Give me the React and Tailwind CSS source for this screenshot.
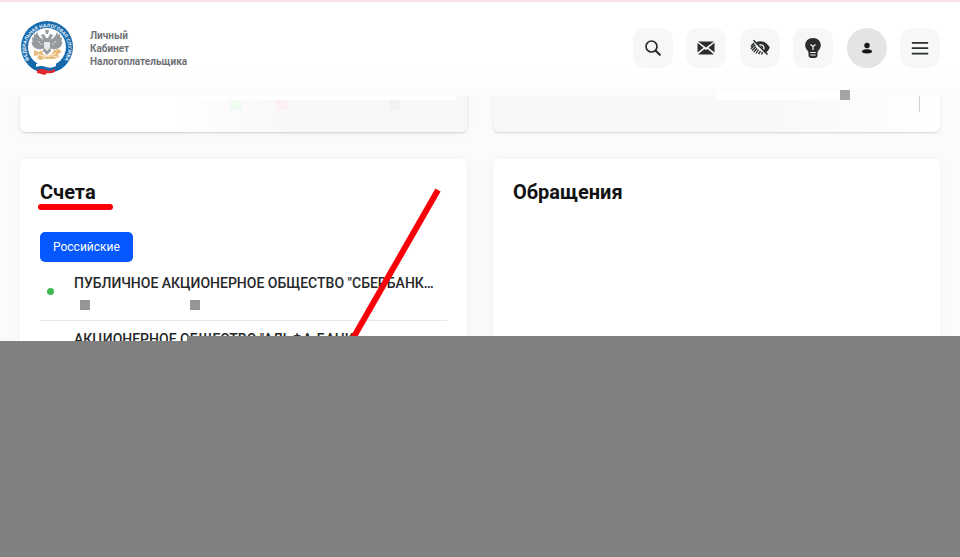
import React from 'react'

const accounts = [
  { id: 1, name: 'ПУБЛИЧНОЕ АКЦИОНЕРНОЕ ОБЩЕСТВО "СБЕРБАНК…' },
  { id: 2, name: 'АКЦИОНЕРНОЕ ОБЩЕСТВО "АЛЬФА-БАНК"' },
]

function Logo() {
  return (
    <svg viewBox="0 0 54 54" className="size-[54px] shrink-0" aria-hidden="true">
      <circle cx="27" cy="26" r="26" fill="#1668ab" />
      <circle cx="27" cy="26" r="19" fill="#fff" />
      <defs>
        <path id="ring" d="M12.500 42.500 A21 21 0 1 1 41.500 42.500" />
      </defs>
      <text fill="#e4f1fa" fontSize="5" fontWeight="700" fontFamily="Roboto, sans-serif">
        <textPath href="#ring" startOffset="50%" textAnchor="middle">ФЕДЕРАЛЬНАЯ  НАЛОГОВАЯ  СЛУЖБА</textPath>
      </text>
      {/* eagle */}
      <g fill="#959a9f">
        <path d="M25 20 C21 18 18 15 17 11 L15.500 14 L14 12.500 L13.500 17 L12 16 L12.500 21 L11.500 21 C12 26 16 29 22 28 L26 26 Z" />
        <path d="M29 20 C33 18 36 15 37 11 L38.500 14 L40 12.500 L40.500 17 L42 16 L41.500 21 L42.500 21 C42 26 38 29 32 28 L28 26 Z" />
        <path d="M26 17 L24 13 L21 14 L22 17 L24 20 L23 30 L27 34 L31 30 L30 20 L32 17 L33 14 L30 13 L28 17 Z" />
        <path d="M25 9 h4 l-1 4 h-2 Z" />
      </g>
      <path d="M24 21 h6 v6 l-3 3 l-3 -3 Z" fill="#e6e8ea" />
      <path d="M20 14 l3 3 M34 14 l-3 3 M18 20 l4 4 M36 20 l-4 4" stroke="#e8eaec" strokeWidth="0.800" />
      <path d="M14 29 l5 2 l3 -2 l1 4 l4 2 l5 -2 l2 -4 l5 -1 l3 3 l-4 2 l1 3 l-5 2 h-9 l-5 1 l-3 -2 l2 -3 l-5 1 Z" fill="#e6bd7c" />
      <path d="M18 33 l5 2 h8 l5 -3 M22 39 l4 -3 M33 35 l4 1" stroke="#fff3dc" fill="none" />
      {/* flag ribbon */}
      <path d="M16 43 q5 -2 10 0 t10 -1 v5 q-5 2 -10 0 t-10 1 Z" fill="#fff" />
      <path d="M16 46 q5 -2 10 0 t10 -1 v4 q-5 2 -10 0 t-10 1 Z" fill="#1668ab" />
      <path d="M17 49 q5 -2 9 0 t9 -1 v3 q-5 2 -8 1 l-2 2 l-8 -2 Z" fill="#e32a2e" />
    </svg>
  )
}

function SearchIcon() {
  return (
    <svg viewBox="0 0 20 20" className="size-5" fill="none" stroke="#2b2c2e" strokeWidth="1.700" strokeLinecap="round">
      <circle cx="8.500" cy="8.500" r="5.500" />
      <path d="M12.700 12.700 L16.800 16.800" strokeWidth="2.200" />
    </svg>
  )
}

function MailIcon() {
  return (
    <svg viewBox="0 0 20 20" className="size-5" fill="#2b2c2e">
      <path d="M2 3.500 H18 L10 9.500 Z" />
      <path d="M1.500 4.800 L7.500 9.700 L1.500 14.500 Z" />
      <path d="M18.500 4.800 L12.500 9.700 L18.500 14.500 Z" />
      <path d="M2 16.500 L8.400 10.900 L10 12 L11.600 10.900 L18 16.500 Z" />
    </svg>
  )
}

function HiddenIcon() {
  return (
    <svg viewBox="0 0 20 20" className="size-5" fill="none" stroke="#2b2c2e">
      <path d="M6 4.200 C11.500 1.500 17 4.500 19.800 9.500 C18.500 12.300 17 14 15.300 15 L13.500 13 C16.500 9 13 4.800 8.600 6.800 Z" fill="#2b2c2e" stroke="none" />
      <path d="M10 7.500 C12.500 7 13.800 9 13 11 Z" fill="#2b2c2e" stroke="none" />
      <path d="M4 5 L1 8.500 M5.300 6.500 L0.800 10.800 M6 8.500 L2 12.500 M7 10.300 L3.800 14 M8.500 11.500 L6 15.500 M10.500 12.800 L8.700 16.200 M12.700 14 L11.500 16.500" strokeWidth="1.400" />
      <path d="M3.500 2.200 L17.500 16.500" strokeWidth="1.600" />
    </svg>
  )
}

function BulbIcon() {
  return (
    <svg viewBox="0 0 20 20" className="size-5">
      <path d="M10 0 C5.300 0 2.200 3.200 2.200 7.200 C2.200 9.800 3.600 11.500 4.700 12.700 C5.300 13.300 5.500 14 5.500 15 V17.300 C5.500 19 6.500 20 8.200 20 H11.800 C13.500 20 14.500 19 14.500 17.300 V15 C14.500 14 14.700 13.300 15.300 12.700 C16.400 11.500 17.800 9.800 17.800 7.200 C17.800 3.200 14.700 0 10 0 Z" fill="#2b2c2e" />
      <path d="M7.500 6.500 L10 8.500 L12.500 6.500 M10 8.500 V12 M7.300 14.500 H12.700 M7.300 17 H12.700" stroke="#f6f8f8" strokeWidth="1.200" fill="none" />
    </svg>
  )
}

function UserIcon() {
  return (
    <svg viewBox="0 0 20 20" className="size-5" fill="#151617">
      <circle cx="10" cy="7.500" r="2.700" />
      <path d="M5 13.500 C5 11.800 8 11.300 10 11.300 C12 11.300 15 11.800 15 13.500 C15 15.200 13 15.400 10 15.400 C7 15.400 5 15.200 5 13.500 Z" />
    </svg>
  )
}

function MenuIcon() {
  return (
    <svg viewBox="0 0 20 20" className="size-5" stroke="#2b2c2e" strokeWidth="1.700" strokeLinecap="round">
      <path d="M2.500 4.800 H17.500 M2.500 10.200 H17.500 M2.500 15.600 H17.500" />
    </svg>
  )
}

const actions = [
  { label: 'Поиск', Icon: SearchIcon },
  { label: 'Сообщения', Icon: MailIcon },
  { label: 'Версия для слабовидящих', Icon: HiddenIcon },
  { label: 'Подсказки', Icon: BulbIcon },
  { label: 'Профиль', Icon: UserIcon, round: true },
  { label: 'Меню', Icon: MenuIcon },
]

function Header() {
  return (
    <header className="relative z-10 flex h-24 items-center justify-between border-t-2 border-[#f8e1e5] bg-linear-to-b from-white from-70% to-[#fcfcfc] px-5 pb-0.5">
      <a href="#" className="flex items-center gap-4 text-[10px] leading-[13px] font-bold text-[#6f7176]">
        <Logo />
        <span>Личный<br />Кабинет<br />Налогоплательщика</span>
      </a>
      <nav className="flex w-[307px] justify-between">
        {actions.map(({ label, Icon, round }) => (
          <button
            key={label}
            aria-label={label}
            className={round
              ? 'flex size-10 items-center justify-center rounded-full bg-[#e4e4e7]'
              : 'flex size-10 items-center justify-center rounded-xl bg-[#f6f8f8]'}
          >
            <Icon />
          </button>
        ))}
      </nav>
    </header>
  )
}

function AccountRow({ name }) {
  return (
    <li className="flex items-center border-b border-[#e8e8ea] pt-2 pb-2.5">
      <span className="ml-[7px] size-[7px] shrink-0 rounded-full bg-[#3fb950]" />
      <div className="ml-5 min-w-0">
        <p className="text-sm leading-5 font-medium whitespace-nowrap text-[#27282a]">{name}</p>
        <div className="mt-[7px] ml-1.5 flex gap-[100px]">
          <span className="size-2.5 bg-[#969696]" />
          <span className="size-2.5 bg-[#969696]" />
        </div>
      </div>
    </li>
  )
}

export default function App() {
  return (
    <div className="flex min-h-screen flex-col overflow-hidden bg-[#fafbfd] font-[Roboto,sans-serif]">
      <Header />
      <main className="grid grid-cols-2 gap-x-[26px] gap-y-[27px] px-5">
        <section className="h-9 rounded-b-md bg-linear-to-r from-white from-35% to-[#f8f8f8] to-60% shadow-[0_1px_2px_rgba(0,0,0,0.16),0_0_8px_rgba(0,0,0,0.05)]">
          <div className="ml-[150px] h-1 w-[286px] bg-white" />
          <div className="flex">
            <span className="ml-[210px] h-2.5 w-3 bg-[#effcef]" />
            <span className="ml-[34px] h-2.5 w-3 bg-[#fdf0f5]" />
            <span className="ml-[102px] size-2.5 bg-[#f2f2f2]" />
          </div>
        </section>
        <section className="relative z-20 flex h-9 items-start justify-end rounded-b-md bg-linear-to-r from-[#f8f8f8] from-60% to-white pr-5 shadow-[0_1px_2px_rgba(0,0,0,0.16)]">
          <span className="-mt-1.5 h-2.5 w-[123px] bg-white" />
          <span className="-mt-1.5 mr-[69px] size-2.5 bg-[#a4a4a4]" />
          <span className="h-4 w-px bg-[#cfcfcf]" />
        </section>

        <section className="relative rounded-md bg-white px-5 pt-[19px] shadow-[0_0_8px_rgba(0,0,0,0.05)]">
          <h2 className="text-xl leading-7 font-bold text-[#111]">Счета</h2>
          <div className="absolute top-[45px] left-[18px] h-1.5 w-[75px] rounded-full bg-[#f90008]" />
          <button className="mt-[26px] block h-[30px] rounded-[5px] bg-[#0557ff] px-[13px] text-xs text-white">Российские</button>
          <ul className="mt-[3px]">
            {accounts.map((account) => (
              <AccountRow key={account.id} name={account.name} />
            ))}
          </ul>
          <svg className="absolute top-0 left-0 h-full w-full" viewBox="0 0 447 240" preserveAspectRatio="xMinYMin slice" aria-hidden="true">
            <path d="M418 31 L316 209" stroke="#f90008" strokeWidth="6" />
          </svg>
        </section>
        <section className="rounded-md bg-white px-5 pt-[19px] shadow-[0_0_8px_rgba(0,0,0,0.05)]">
          <h2 className="text-xl leading-7 font-bold text-[#111]">Обращения</h2>
        </section>
      </main>
      <footer className="relative z-20 -mt-9 flex-1 bg-[#808080]">
        <div className="absolute -top-[5px] right-0 left-[187px] h-[5px] bg-[#808080]" />
      </footer>
    </div>
  )
}
